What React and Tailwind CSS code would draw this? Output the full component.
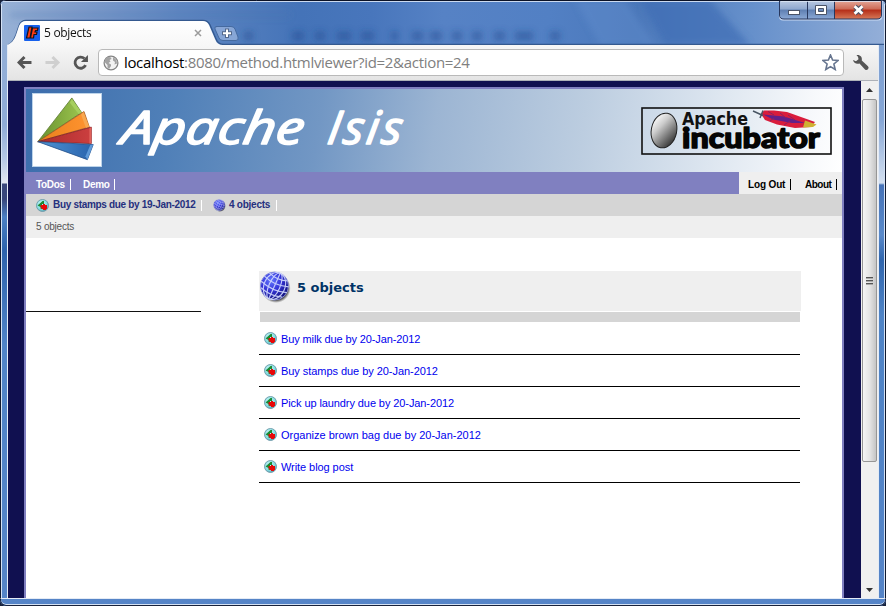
import React from "react";

const ARIAL = "font-['Liberation_Sans',Arial,sans-serif]";

function TaskIcon({ className = "" }) {
  return (
    <svg className={`w-[13px] h-[13px] shrink-0 ${className}`} viewBox="0 0 13 13">
      <defs>
        <radialGradient id="task" cx="40%" cy="35%" r="65%">
          <stop offset="0" stopColor="#c8f8f8" />
          <stop offset="0.7" stopColor="#84dce0" />
          <stop offset="1" stopColor="#5aa4b4" />
        </radialGradient>
      </defs>
      <circle cx="6.5" cy="6.5" r="6" fill="url(#task)" stroke="#6c98a8" strokeWidth="0.9" />
      <path d="M1.5 6.500L6.500 2H8V5H6V10L4.500 9.800V8Z" fill="#1c8a34" />
      <path d="M5 6H7V5H9V6H11V10H10V11H7V10H5.500V8.500H4.500V6.500Z" fill="#e80808" />
    </svg>
  );
}

function Globe({ className = "", small = false }) {
  return (
    <svg className={`shrink-0 ${className}`} viewBox="0 0 32 32">
      <defs>
        <radialGradient id="globe" cx="38%" cy="30%" r="72%">
          <stop offset="0" stopColor="#6478ff" />
          <stop offset="0.5" stopColor="#3434d8" />
          <stop offset="1" stopColor="#101078" />
        </radialGradient>
        <radialGradient id="globeShadow">
          <stop offset="0.82" stopColor="#555" stopOpacity="0.95" />
          <stop offset="1" stopColor="#777" stopOpacity="0" />
        </radialGradient>
      </defs>
      <circle cx="17" cy="17.3" r="14.7" fill="url(#globeShadow)" />
      <circle cx="15.5" cy="15" r="14" fill="url(#globe)" stroke="#8c94dc" strokeWidth="0.9" />
      <g fill="none" stroke="#d4dcff" strokeWidth={small ? 1.3 : 1.15} opacity={small ? 0.7 : 0.9} transform="rotate(24 15.5 15)">
        <path d="M15.5 1V29" />
        <ellipse cx="15.5" cy="15" rx="5.5" ry="14" />
        <ellipse cx="15.5" cy="15" rx="10.5" ry="14" />
        <path d="M5.5 5 Q15.5 9 25.5 5 M2.3 10 Q15.5 15 28.7 10 M1.5 16 Q15.5 21 29.5 16 M4 22 Q15.5 26 27 22" />
      </g>
    </svg>
  );
}

function WindowButtons() {
  return (
    <svg className="absolute right-[2px] top-0 w-[106px] h-[22px]" viewBox="778 0 106 22">
      <defs>
        <linearGradient id="wb" x2="0" y2="1">
          <stop offset="0" stopColor="#b8c8e2" />
          <stop offset="0.45" stopColor="#8fa8cf" />
          <stop offset="0.5" stopColor="#5f7fb2" />
          <stop offset="1" stopColor="#8ba9d6" />
        </linearGradient>
        <linearGradient id="wr" x2="0" y2="1">
          <stop offset="0" stopColor="#e3a596" />
          <stop offset="0.45" stopColor="#cd6a56" />
          <stop offset="0.5" stopColor="#b52d18" />
          <stop offset="1" stopColor="#d77a58" />
        </linearGradient>
      </defs>
      <path d="M779 1V16Q779 20.500 783 20.500H878Q882.500 20.500 882.500 16V1" fill="#c9d9f1" />
      <path d="M780 1H807V19H784Q780 19 780 15Z" fill="url(#wb)" />
      <path d="M808 1H834V19H808Z" fill="url(#wb)" />
      <path d="M835 1H881V15Q881 19 877 19H835Z" fill="url(#wr)" />
      <path d="M779.500 1V15Q779.500 19 784 19H877Q881.500 19 881.500 15V1 M807.500 1V19 M834.500 1V19" fill="none" stroke="#27375e" />
      <path d="M781 1.500H880" stroke="#dfe8f6" opacity=".8" />
      <rect x="788.500" y="10.500" width="11" height="4" fill="#fff" stroke="#4b5468" />
      <path fillRule="evenodd" d="M815.500 5.500H826.500V14.500H815.500ZM818.500 8.500V11.500H823.500V8.500Z" fill="#fff" stroke="#4b5468" />
      <path d="M855 6.500L862 13.500M862 6.500L855 13.500" stroke="#4b5468" strokeWidth="4.800" />
      <path d="M854.600 6.200L862.400 13.800M862.400 6.200L854.600 13.800" stroke="#fff" strokeWidth="2.700" />
    </svg>
  );
}

function TitleBar() {
  return (
    <header className="relative h-[45px] shrink-0 pt-[21px] pl-[6px] flex">
      <svg className="absolute inset-0 w-[886px] h-[45px]" viewBox="0 0 886 45">
        <defs>
          <linearGradient id="glass">
            <stop offset="0" stopColor="#98b2d6" />
            <stop offset="0.08" stopColor="#829fcd" />
            <stop offset="0.2" stopColor="#5f87c2" />
            <stop offset="0.34" stopColor="#4473b8" />
            <stop offset="0.42" stopColor="#4876bc" />
            <stop offset="0.5" stopColor="#5682c5" />
            <stop offset="0.62" stopColor="#5280c4" />
            <stop offset="0.72" stopColor="#4b78ba" />
            <stop offset="0.85" stopColor="#6690cb" />
            <stop offset="1" stopColor="#94afd8" />
          </linearGradient>
          <linearGradient id="tabFill" x2="0" y2="1">
            <stop offset="0" stopColor="#fff" />
            <stop offset="1" stopColor="#f7f7f7" />
          </linearGradient>
          <filter id="soft" x="-20%" y="-50%" width="140%" height="200%">
            <feGaussianBlur stdDeviation="3" />
          </filter>
        </defs>
        <rect width="886" height="45" fill="url(#glass)" />
        <g filter="url(#soft)">
          <path d="M640 0H710L750 45H665Z" fill="#3e6db3" opacity=".65" />
          <path d="M575 0H625L655 45H600Z" fill="#6791d2" opacity=".35" />
          <path d="M10 15H290" stroke="#4d74ae" strokeWidth="6" opacity=".28" />
          <path d="M244 36h9M292 36h12M315 36h10M337 36h14M361 36h13M391 36h7M412 36h11M430 36h12M452 36h10M472 36h10M494 36h11M515 36h18M550 36h10" stroke="#244d91" strokeWidth="9" opacity=".5" />
        </g>
        <path d="M8 45C12 44 14 40 16 35L19 26Q21 20.500 26 20.500H203Q208 20.500 210 25L216 39Q218 44.500 224 44.500H886" fill="none" stroke="#34598f" strokeWidth="1.400" />
        <path d="M7 45C12 43 14 40 16 35L19 26Q21 21 26 21H203Q207 21 209 25L215 39Q217 45 223 45Z" fill="url(#tabFill)" />
        <path d="M216 26.500H231Q234 26.500 235 29L238 37Q239 40.500 236 40.500H223Q220 40.500 219 38L215 29Q214 26.500 217 26.500Z" fill="#87a6d6" stroke="#456a9f" />
        <path d="M227 28.500V38M222 33.250H232" stroke="#53688b" strokeWidth="4" />
        <path d="M227 29.500V37M223 33.250H231" stroke="#fff" strokeWidth="2" />
        <path d="M0 .5H886" stroke="#0b1226" />
        <path d="M3 1.500H883" stroke="#cbdaf0" />
        <path d="M.5 2V45M885.500 2V45" stroke="#111a30" />
        <path d="M1.500 4V45M884.500 4V45" stroke="#d5e2f4" />
      </svg>
      <div className="relative flex items-center h-[23px] w-[198px] pl-[18px]">
        <svg className="w-4 h-4" viewBox="0 0 16 16">
          <rect width="16" height="16" rx="1" fill="#1761ed" />
          <path d="M5 2H8L6 13H2.500ZM8.500 3H14L13.500 5.500H11.500L11 7H13L12.500 9.500H10L9.500 13H6.500Z" fill="#ff3b10" stroke="#12131d" strokeWidth="1.200" />
        </svg>
        <span className="ml-1 text-[12px] tracking-[-0.3px] leading-[16px] text-[#111] font-['Open_Sans','Noto_Sans',sans-serif] whitespace-nowrap">5 objects</span>
        <svg className="ml-auto mr-[2px] w-2 h-2" viewBox="0 0 8 8">
          <path d="M1 1L7 7M7 1L1 7" stroke="#9b9b9b" strokeWidth="1.500" />
        </svg>
      </div>
      <WindowButtons />
    </header>
  );
}

function Toolbar() {
  return (
    <div className="h-9 shrink-0 flex items-center bg-gradient-to-b from-[#f7f7f7] to-[#e4e4e4] border-b border-[#adb1b8] pl-[9px] pr-2">
      <svg className="w-[74px] h-[18px]" viewBox="17 54 74 18">
        <path d="M31.500 62.500H19.500M24.500 57L19 62.500L24.500 68" fill="none" stroke="#555" strokeWidth="3" />
        <path d="M45.500 62.500H57.500M52.500 57L58 62.500L52.500 68" fill="none" stroke="#cfcfcf" strokeWidth="3" />
        <path d="M85.700 65.200A5.600 5.600 0 1 1 84.500 58.500" fill="none" stroke="#555" strokeWidth="2.800" />
        <path d="M88 55V62H81Z" fill="#555" />
      </svg>
      <div className="ml-[7px] h-[27px] w-[747px] flex items-center rounded-[4px] border border-[#b9b9b9] bg-white pl-1 pr-1">
        <svg className="w-4 h-4 shrink-0" viewBox="0 0 16 16">
          <circle cx="8" cy="8" r="6.900" fill="#f2f2f2" stroke="#858585" strokeWidth="1.300" />
          <path d="M2 4.500L5 1.800L8 2.500L8.500 4L6.500 5L7.500 6.500L5.500 8L8 9.500L8 11L6 14L4.500 12.500V10L2 7.500ZM10 2L13.500 5L14 8.500L11.500 9.500L12 7L10 5.500Z" fill="#a3a3a3" />
        </svg>
        <span className="ml-[5px] -mt-px text-[15px] leading-5 tracking-[-0.3px] text-[#808080] font-['Open_Sans','Noto_Sans',sans-serif] whitespace-nowrap">
          <span className="text-black">localhost</span>:8080/method.htmlviewer?id=2&amp;action=24
        </span>
        <svg className="ml-auto w-[17px] h-[17px]" viewBox="0 0 17 17">
          <path d="M8.500 1L10.600 6.100L16 6.500L11.900 10L13.200 15.500L8.500 12.600L3.800 15.500L5.100 10L1 6.500L6.400 6.100Z" fill="#fff" stroke="#66758f" strokeWidth="1.600" />
        </svg>
      </div>
      <svg className="ml-2 w-[18px] h-[18px]" viewBox="0 0 18 18">
        <path d="M4.500 1.200C8 .5 10.500 3 9.800 6.500L16 12.200A2.200 2.200 0 0 1 13 15.400L7.500 9.500C4.500 10.500 1.500 9 1 6L4 7.300L6.500 5.300L6 2.700Z" fill="#555" />
      </svg>
    </div>
  );
}

function Banner() {
  return (
    <div className="h-[83px] shrink-0 flex items-start pt-[4px] pl-[6px] pr-[10px] bg-[linear-gradient(98deg,#3c6dac_0%,#5080b8_18%,#7297c4_36%,#9cb5d3_50%,#bccde0_68%,#d9e3ee_82%,#f6f8fb_95%,#ffffff_100%)]">
      <svg className="w-[70px] h-[74px] bg-white border border-[#bdd4ea]" viewBox="32 93 70 74">
        <defs>
          <linearGradient id="g1"><stop offset="0" stopColor="#68902e" /><stop offset="1" stopColor="#9cc54f" /></linearGradient>
          <linearGradient id="g2"><stop offset="0" stopColor="#e97f1c" /><stop offset="1" stopColor="#ff9430" /></linearGradient>
          <linearGradient id="g3"><stop offset="0" stopColor="#a92a2c" /><stop offset="1" stopColor="#cc3f3f" /></linearGradient>
          <linearGradient id="g4"><stop offset="0" stopColor="#4f93d3" /><stop offset="1" stopColor="#2963ad" /></linearGradient>
        </defs>
        <g strokeLinejoin="round" strokeWidth=".8">
          <path d="M37 142L72 97L82 112Z" fill="url(#g1)" stroke="#56752a" />
          <path d="M72 98L82 112L79 113.500L70 102Z" fill="#a6cf5e" />
          <path d="M37 142L84.500 111L90 127Z" fill="url(#g2)" stroke="#a2561a" />
          <path d="M84 111.500L90 127L86.500 128L81.500 114Z" fill="#f8a850" />
          <path d="M37 142L92 127V144Z" fill="url(#g3)" stroke="#801d22" />
          <path d="M92 127V144H90L90 128.500Z" fill="#e0605a" />
          <path d="M37 142L94 145L88 160.500Z" fill="url(#g4)" stroke="#244f88" />
          <path d="M94 145L88 160.500L86 157L91 145.500Z" fill="#5e99d8" />
        </g>
      </svg>
      <svg className="ml-[10px] w-[300px] h-[74px]" viewBox="112 93 300 74">
        <g fill="#fff" stroke="#fff" strokeWidth="1.6" strokeLinejoin="round" fontFamily="'Open Sans', 'Noto Sans', sans-serif" fontStyle="italic" fontWeight="400" transform="translate(0 144) skewX(-9)">
          <text x="120" y="0" fontSize="46" textLength="182" lengthAdjust="spacingAndGlyphs">Apache</text>
          <text x="326" y="0" fontSize="46" textLength="74" lengthAdjust="spacing">Isis</text>
        </g>
      </svg>
      <svg className="ml-auto mt-[14px] w-[191px] h-[48px]" viewBox="641 107 191 48">
        <defs>
          <linearGradient id="egg" x1="0.1" y1="0.1" x2="0.9" y2="0.8">
            <stop offset="0" stopColor="#fff" /><stop offset="0.35" stopColor="#ccc" /><stop offset="1" stopColor="#3b3b3b" />
          </linearGradient>
        </defs>
        <rect x="642" y="108" width="189" height="46" fill="none" stroke="#111" strokeWidth="1.600" />
        <ellipse cx="664" cy="130.500" rx="12.700" ry="17.500" transform="rotate(11 664 130.500)" fill="url(#egg)" stroke="#222" />
        <text x="682" y="124.500" fontFamily="DejaVu Sans, sans-serif" fontWeight="700" fontSize="17.500" textLength="66" lengthAdjust="spacingAndGlyphs" fill="#111">Apache</text>
        <text x="682" y="148" fontFamily="Lato, sans-serif" fontWeight="900" fontSize="28" textLength="138" lengthAdjust="spacingAndGlyphs" fill="#050505" stroke="#050505" strokeWidth="1.400" strokeLinejoin="round">incubator</text>
        <path d="M761 114L764 110.500L774 110.500L787 112L801 117L815 122L811 127L795 128L777 124.500L765 120Z" fill="#d91c3c" />
        <path d="M763 114.500L784 116.500L805 123L792 123L773 119.500Z" fill="#622089" />
        <path d="M768 111.500L774 115M780 113L786 118M788 115L795 120M770 121L774 118M784 125L790 121" stroke="#8d205f" />
        <path d="M753 111L763 115.500M760 118L763 110.500" stroke="#485563" strokeWidth="1.500" />
        <path d="M805 120.500L816.500 124.500L813 127L803 127.500Z" fill="#cfb133" />
      </svg>
    </div>
  );
}

const Bar = ({ className = "" }) => <span className={`w-px h-[11px] shrink-0 ${className}`} />;

function Menu() {
  return (
    <nav className="h-[22px] shrink-0 flex bg-[#8080c0] text-[10px] leading-[12px] font-bold whitespace-nowrap">
      <div className="flex items-center grow pl-[10px] pt-[3px] text-white">
        <span className="w-[29px] tracking-[-0.3px]">ToDos</span>
        <Bar className="ml-[5px] bg-white" />
        <span className="ml-[12px] w-[26px] tracking-[-0.3px]">Demo</span>
        <Bar className="ml-[5px] bg-white" />
      </div>
      <div className="flex items-center w-[103px] shrink-0 bg-[#efefef] pl-[9px] pt-[3px] text-black">
        <span className="w-[37px] tracking-[-0.15px]">Log Out</span>
        <Bar className="ml-[5px] bg-black" />
        <span className="ml-[14px] w-[27px] tracking-[-0.5px]">About</span>
        <Bar className="ml-[4px] bg-black" />
      </div>
    </nav>
  );
}

function History() {
  return (
    <div className="h-[22px] shrink-0 flex items-center bg-[#d5d5d5] pl-[10px] text-[10px] leading-[12px] font-bold text-[#25307e] whitespace-nowrap">
      <TaskIcon />
      <span className="ml-1 w-[143px] tracking-[-0.32px]">Buy stamps due by 19-Jan-2012</span>
      <Bar className="ml-[5px] bg-white" />
      <Globe small className="ml-[11px] w-[13px] h-[13px]" />
      <span className="ml-[3px] w-[42px] tracking-[-0.25px]">4 objects</span>
      <Bar className="ml-[5px] bg-white" />
    </div>
  );
}

const items = [
  ["Buy milk due by 20-Jan-2012", "tracking-[-0.12px]"],
  ["Buy stamps due by 20-Jan-2012", "tracking-[-0.05px]"],
  ["Pick up laundry due by 20-Jan-2012", "tracking-[-0.09px]"],
  ["Organize brown bag due by 20-Jan-2012", "tracking-[0px]"],
  ["Write blog post", "tracking-[-0.07px]"],
];

function Content() {
  return (
    <main className="flex grow bg-white">
      <div className="w-[175px] h-[74px] border-b border-[#111111]" />
      <section className="ml-[58px] mt-[33px] w-[542px]">
        <div className="h-10 flex bg-[#efefef]">
          <Globe className="w-8 h-8" />
          <h1 className="ml-[6px] mt-[8px] text-[13px] leading-[17px] font-bold text-[#003366] font-['DejaVu_Sans',Verdana,sans-serif]">5 objects</h1>
        </div>
        <div className="mt-px mx-px h-[10px] bg-[#d5d5d5]" />
        <ul className="mt-px mr-px">
          {items.map(([label, tracking]) => (
            <li key={label} className="h-8 flex items-center border-b border-black pl-[5px] text-[11px] leading-[14px] text-[#0000ee] whitespace-nowrap">
              <TaskIcon />
              <a className={`ml-1 mt-px ${tracking}`}>{label}</a>
            </li>
          ))}
        </ul>
      </section>
    </main>
  );
}

function Scrollbar() {
  return (
    <div className="w-[17px] shrink-0 flex flex-col items-start pl-px bg-[#f0f0f0]">
      <svg className="h-[17px] w-[15px] shrink-0" viewBox="0 0 15 17"><path d="M4 11L7.500 7L11 11Z" fill="#333" /></svg>
      <div className="mt-px w-[15px] h-[363px] flex flex-col items-center justify-center gap-px rounded-[2px] border border-[#969696] bg-gradient-to-r from-[#f5f5f5] via-[#e5e5e5] to-[#c5c5c5]">
        <span className="w-[7px] h-[2px] bg-[#555] border-b border-[#aaa]" />
        <span className="w-[7px] h-[2px] bg-[#555] border-b border-[#aaa]" />
        <span className="w-[7px] h-[2px] bg-[#555] border-b border-[#aaa]" />
      </div>
      <svg className="mt-auto h-[17px] w-[15px] shrink-0" viewBox="0 0 15 17"><path d="M4 7L7.500 11L11 7Z" fill="#333" /></svg>
    </div>
  );
}

const SIDE = "shrink-0 shadow-[inset_1px_0_0_#d5e2f4] bg-[linear-gradient(180deg,#93afd7_0px,#8fabd6_80px,#b8cae6_115px,#e2e7f0_138px,#39477b_139px,#39477b_154px,#4c80c4_172px,#2d62ac_205px,#5084c8_300px,#5584c7_560px)]";
const SIDE_RIGHT = "shrink-0 shadow-[inset_-1px_0_0_#d5e2f4] bg-[linear-gradient(180deg,#7d9fd1_0px,#87a7d6_75px,#d4e0f0_138px,#4673b8_140px,#5a8aca_190px,#2f65ad_215px,#4f84c6_270px,#5584c7_560px)]";

export default function App() {
  return (
    <div className={`w-[886px] h-[606px] overflow-hidden bg-[#18213a] ${ARIAL}`}>
      <div className="w-[886px] h-[606px] flex flex-col overflow-hidden rounded-[6px] border-0 bg-[#5584c7]">
        <TitleBar />
        <div className="flex grow min-h-0">
          <div className={`w-[7px] border-l border-[#111a30] ${SIDE}`} />
          <div className="w-[872px] flex flex-col border-x border-[#e4ebf5]">
            <Toolbar />
            <div className="flex grow min-h-0 bg-[#101050]">
              <div className="ml-4 mt-[6px] mr-[17px] w-[820px] shrink-0 flex flex-col border-2 border-b-0 border-[#8080c0] bg-white">
                <Banner />
                <Menu />
                <History />
                <div className="h-[22px] shrink-0 bg-[#efefef] pl-[10px] pt-[5px] text-[10px] leading-[12px] tracking-[-0.22px] text-[#555]">5 objects</div>
                <Content />
              </div>
              <Scrollbar />
            </div>
          </div>
          <div className={`w-[7px] border-r border-[#111a30] ${SIDE_RIGHT}`} />
        </div>
        <div className="h-2 shrink-0 rounded-b-[6px] border border-t-[#e4ebf5] border-x-[#18213a] border-b-[#18213a] bg-[#5584c7] shadow-[inset_0_-1px_0_#d5e2f4]" />
      </div>
    </div>
  );
}
